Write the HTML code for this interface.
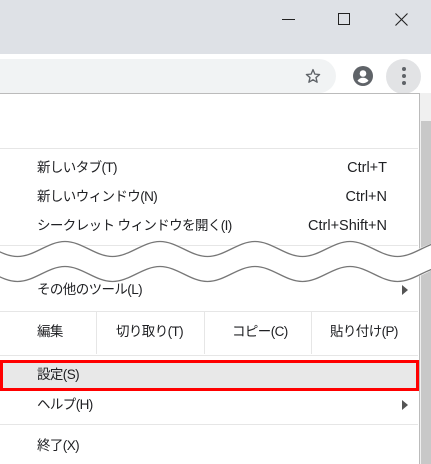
<!DOCTYPE html>
<html><head><meta charset="utf-8"><style>
*{margin:0;padding:0;box-sizing:border-box}
body{width:431px;height:464px;overflow:hidden;background:#fff;position:relative;font-family:"Liberation Sans","Noto Sans CJK JP",sans-serif;font-size:13.5px;color:#202124}
.a{position:absolute}
.t{position:absolute;left:37px;line-height:16px;letter-spacing:-0.6px}
.r{position:absolute;right:44px;line-height:16px;font-size:14.5px}
.sep{position:absolute;left:0;width:418px;height:1px;background:#e6e6e6}
.arr{position:absolute;left:402px;width:0;height:0;border-left:6px solid #555;border-top:5px solid transparent;border-bottom:5px solid transparent}
</style></head><body>
<div class="a" style="left:0;top:0;width:431px;height:54px;background:#dee1e6"></div>
<div class="a" style="left:282px;top:19px;width:13px;height:1px;background:#222"></div>
<div class="a" style="left:338px;top:13px;width:12px;height:12px;border:1px solid #222"></div>
<svg class="a" style="left:395px;top:13px" width="13" height="13"><path d="M0.5 0.5L12.5 12.5M12.5 0.5L0.5 12.5" stroke="#222" stroke-width="1.1"/></svg>
<div class="a" style="left:-20px;top:59px;width:356px;height:34px;background:#f1f3f4;border-radius:17px"></div>
<svg class="a" style="left:304px;top:67px" width="18" height="18" viewBox="0 0 24 24"><path d="M12 3.5l2.5 6 6.3.5-4.8 4.1 1.5 6.2L12 17l-5.5 3.3 1.5-6.2-4.8-4.1 6.3-.5z" fill="none" stroke="#5f6368" stroke-width="1.8" stroke-linejoin="round"/></svg>
<svg class="a" style="left:353px;top:66px" width="20" height="20" viewBox="0 0 20 20"><circle cx="10" cy="10" r="10" fill="#5f6368"/><circle cx="10" cy="7.5" r="3.3" fill="#fff"/><path d="M4.5 14.8c1.5-2.2 3.5-3 5.5-3s4 .8 5.5 3c-1.4 1.5-3.3 2.4-5.5 2.4s-4.1-.9-5.5-2.4z" fill="#fff"/></svg>
<div class="a" style="left:386px;top:59px;width:35px;height:35px;border-radius:50%;background:#e2e3e5"></div>
<div class="a" style="left:402px;top:67px;width:4px;height:4px;border-radius:50%;background:#5f6368"></div>
<div class="a" style="left:402px;top:74px;width:4px;height:4px;border-radius:50%;background:#5f6368"></div>
<div class="a" style="left:402px;top:81px;width:4px;height:4px;border-radius:50%;background:#5f6368"></div>
<div class="a" style="left:420px;top:93px;width:11px;height:371px;background:#f0f0f0"></div>
<div class="a" style="left:421px;top:121px;width:10px;height:343px;background:#c8c8c8"></div>
<div class="a" style="left:0;top:93px;width:420px;height:371px;border-top:1px solid #bbb;border-right:1px solid #bbb;background:#fff"></div>
<div class="sep" style="top:148px"></div>
<div class="t" style="top:160px">新しいタブ(T)</div><div class="r" style="top:160px">Ctrl+T</div>
<div class="t" style="top:189px">新しいウィンドウ(N)</div><div class="r" style="top:189px">Ctrl+N</div>
<div class="t" style="top:218px">シークレット ウィンドウを開く(I)</div><div class="r" style="top:218px">Ctrl+Shift+N</div>
<div class="sep" style="top:245px"></div>
<svg class="a" style="left:0;top:0" width="431" height="464">
<defs><path id="w" d="M-77.5 256.5 C-60.4 256.5 -47.1 241.5 -30 241.5 S0.4 256.5 17.5 256.5 S47.9 241.5 65 241.5 S95.4 256.5 112.5 256.5 S142.9 241.5 160 241.5 S190.4 256.5 207.5 256.5 S237.9 241.5 255 241.5 S285.4 256.5 302.5 256.5 S332.9 241.5 350 241.5 S380.4 256.5 397.5 256.5 S427.9 241.5 445 241.5 S475.4 256.5 492.5 256.5"/></defs>
<use href="#w" transform="translate(0,12.5)" fill="none" stroke="#fff" stroke-width="25"/>
<use href="#w" fill="none" stroke="#777" stroke-width="1.3"/>
<use href="#w" transform="translate(0,25)" fill="none" stroke="#777" stroke-width="1.3"/>
</svg>
<div class="t" style="top:282px">その他のツール(L)</div><div class="arr" style="top:285px"></div>
<div class="sep" style="top:311px"></div>
<div class="a" style="left:96px;top:312px;width:1px;height:42px;background:#e6e6e6"></div>
<div class="a" style="left:204px;top:312px;width:1px;height:42px;background:#e6e6e6"></div>
<div class="a" style="left:311px;top:312px;width:1px;height:42px;background:#e6e6e6"></div>
<div class="t" style="top:324px">編集</div>
<div class="a" style="left:116px;top:324px;line-height:16px;letter-spacing:-0.6px">切り取り(T)</div>
<div class="a" style="left:232px;top:324px;line-height:16px;letter-spacing:-0.6px">コピー(C)</div>
<div class="a" style="left:330px;top:324px;line-height:16px;letter-spacing:-0.6px">貼り付け(P)</div>
<div class="sep" style="top:355px"></div>
<div class="a" style="left:0;top:360px;width:419px;height:31px;background:#e8e8e8;border:3px solid #f00"></div>
<div class="t" style="top:367px">設定(S)</div>
<div class="t" style="top:397px">ヘルプ(H)</div><div class="arr" style="top:400px"></div>
<div class="sep" style="top:424px"></div>
<div class="t" style="top:438px">終了(X)</div>
</body></html>
